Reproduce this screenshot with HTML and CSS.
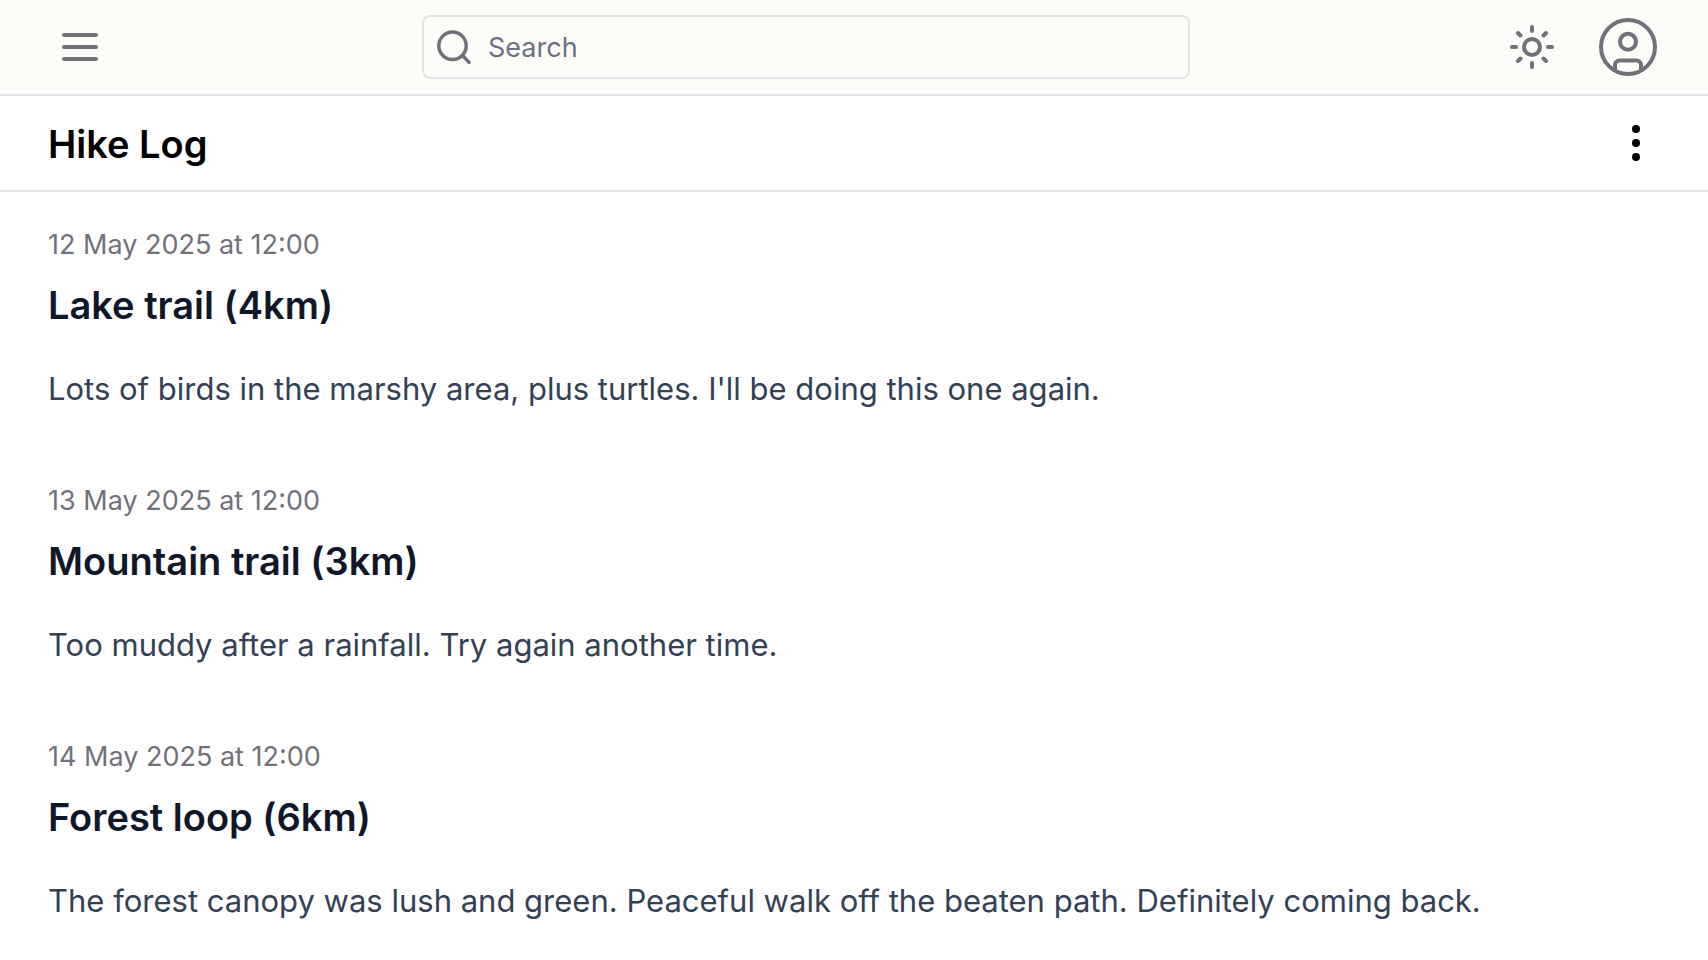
FILE: index.html
```html
<!DOCTYPE html>
<html lang="en">
<head>
    <meta charset="UTF-8">
    <meta name="viewport" content="width=device-width, initial-scale=1.0">
    <title>Hike Log</title>
    <link rel="stylesheet" href="styles.css">
</head>
<body>
    <header class="topbar">
        <button class="icon-button" type="button" aria-label="Menu">
            <svg width="64" height="64" viewBox="0 0 64 64">
                <path d="M16 20h32M16 32h32M16 44h32"/>
            </svg>
        </button>
        <form class="search" role="search">
            <svg width="40" height="40" viewBox="0 0 40 40">
                <circle cx="18.5" cy="17.8" r="13.7"/>
                <path d="M28.5 27.8l6.5 6.5"/>
            </svg>
            <input class="search-input" type="search" name="q" placeholder="Search" aria-label="Search">
        </form>
        <div class="actions">
            <button class="icon-button" type="button" aria-label="Theme">
                <svg width="64" height="64" viewBox="0 0 64 64">
                    <circle cx="32" cy="32" r="8"/>
                    <path d="M32 12v4M32 48v4M12 32h4M48 32h4M18 18l2.5 2.5M43.5 43.5l2.5 2.5M18 46l2.5-2.5M43.5 20.5l2.5-2.5"/>
                </svg>
            </button>
            <button class="icon-button" type="button" aria-label="Account">
                <svg width="64" height="64" viewBox="0 0 64 64">
                    <circle cx="32" cy="32" r="27"/>
                    <circle cx="32" cy="26.7" r="8"/>
                    <path d="M19 55v-5a4.5 4.5 0 0 1 4.5-4.5h17a4.5 4.5 0 0 1 4.5 4.5v5"/>
                </svg>
            </button>
        </div>
    </header>

    <div class="titlebar">
        <h1>Hike Log</h1>
        <button class="more-button" type="button" aria-label="More">
            <svg width="48" height="48" viewBox="0 0 48 48">
                <circle cx="24" cy="9" r="4"/>
                <circle cx="24" cy="23" r="4"/>
                <circle cx="24" cy="37" r="4"/>
            </svg>
        </button>
    </div>

    <main class="entries">
        <article class="entry">
            <time datetime="2025-05-12T12:00">12 May 2025 at 12:00</time>
            <h2>Lake trail (4km)</h2>
            <p>Lots of birds in the marshy area, plus turtles. I'll be doing this one again.</p>
        </article>
        <article class="entry">
            <time datetime="2025-05-13T12:00">13 May 2025 at 12:00</time>
            <h2>Mountain trail (3km)</h2>
            <p>Too muddy after a rainfall. Try again another time.</p>
        </article>
        <article class="entry">
            <time datetime="2025-05-14T12:00">14 May 2025 at 12:00</time>
            <h2>Forest loop (6km)</h2>
            <p>The forest canopy was lush and green. Peaceful walk off the beaten path. Definitely coming back.</p>
        </article>
    </main>
</body>
</html>
```
FILE: styles.css
```css
* {
    box-sizing: border-box;
}
body {
    margin: 0;
    background: #fff;
    color: #000;
    font-family: Inter, "Liberation Sans", sans-serif;
}
h1, h2, p {
    margin: 0;
}
button {
    display: flex;
    padding: 0;
    border: none;
    background: none;
    cursor: pointer;
}
/* Icons */
svg {
    display: block;
    flex: none;
    fill: none;
    stroke: #71717a;
    stroke-width: 4;
    stroke-linecap: round;
    stroke-linejoin: round;
}
.search svg {
    stroke-width: 3.5;
}
.more-button svg {
    fill: #000;
    stroke: none;
}
/* Top bar */
.topbar {
    display: flex;
    justify-content: space-between;
    align-items: center;
    gap: 32px;
    padding: 15px 48px;
    background: #fdfcf8;
    border-bottom: 2px solid #e4e4e7;
}
.search {
    display: flex;
    align-items: center;
    gap: 14px;
    width: 100%;
    max-width: 768px;
    height: 64px;
    padding: 2px 10px 0;
    border: 2px solid #e4e4e7;
    border-radius: 8px;
}
.search-input {
    flex: 1;
    min-width: 0;
    padding: 0;
    border: none;
    outline: none;
    background: none;
    color: #000;
    font-family: inherit;
    font-size: 27px;
    line-height: 40px;
}
.search-input::placeholder {
    color: #6b7280;
}
.actions {
    display: flex;
    gap: 32px;
}
/* Page title */
.titlebar {
    display: flex;
    justify-content: space-between;
    align-items: center;
    padding: 20px 48px 18px;
    border-bottom: 2px solid #e4e4e7;
}
h1, h2 {
    font-size: 38px;
    font-weight: 600;
    line-height: 56px;
}
/* Log entries */
.entries {
    display: flex;
    flex-direction: column;
    gap: 68px;
    padding: 33px 48px;
}
.entry time {
    display: block;
    color: #71717a;
    font-size: 27px;
    line-height: 40px;
}
.entry h2 {
    margin: 12px 0 32px;
    color: #0f172a;
}
.entry p {
    color: #334155;
    font-size: 31px;
    line-height: 48px;
}
```
